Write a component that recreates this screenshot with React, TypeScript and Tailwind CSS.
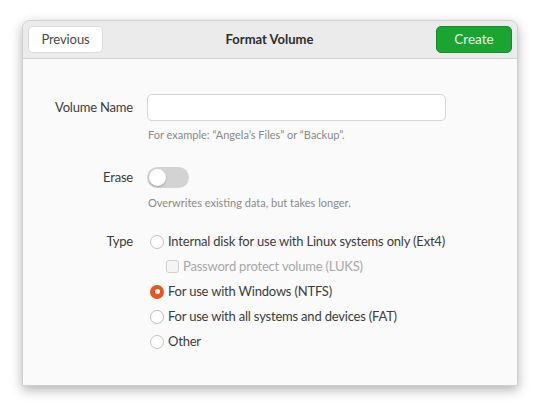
import React, { useState } from 'react';

const font = { fontFamily: 'Lato, "Noto Sans", sans-serif' };

type Opt = { id: string; label: string };

const OPTIONS: Opt[] = [
  { id: 'ext4', label: 'Internal disk for use with Linux systems only (Ext4)' },
  { id: 'ntfs', label: 'For use with Windows (NTFS)' },
  { id: 'fat', label: 'For use with all systems and devices (FAT)' },
  { id: 'other', label: 'Other' },
];

const Radio: React.FC<{ checked: boolean }> = ({ checked }) =>
  checked ? (
    <span className="w-[14px] h-[14px] rounded-full bg-[#e95420] flex items-center justify-center shrink-0">
      <span className="w-[5px] h-[5px] rounded-full bg-white" />
    </span>
  ) : (
    <span className="w-[14px] h-[14px] rounded-full border border-[#c0c0c0] bg-white shrink-0" />
  );

export default function App() {
  const [type, setType] = useState('ntfs');
  const [erase, setErase] = useState(false);

  const row = (o: Opt) => (
    <button
      key={o.id}
      onClick={() => setType(o.id)}
      className="flex items-center h-[25px] pl-[3px] gap-[4px] text-[13px] tracking-[-0.2px] text-[#3d3d3d] text-left"
    >
      <Radio checked={type === o.id} />
      <span>{o.label}</span>
    </button>
  );

  return (
    <div className="w-[540px] h-[410px] bg-white pt-[20px] pl-[22px]" style={font}>
      <div className="w-[496px] h-[366px] rounded-t-[8px] bg-[#fafafa] border border-[#cfcfcf] shadow-[0_4px_12px_rgba(0,0,0,0.3)] flex flex-col overflow-hidden">
        {/* Header bar */}
        <div className="h-[38px] shrink-0 bg-[#ebebeb] border-b border-[#d2d2d2] flex items-center justify-between px-[5px]">
          <button className="w-[75px] h-[27px] rounded-[5px] bg-white border border-[#dadada] text-[13px] tracking-[-0.1px] text-[#4a4a4a]">
            Previous
          </button>
          <span className="text-[13px] font-bold text-[#2e2e2e]">Format Volume</span>
          <button className="w-[76px] h-[27px] rounded-[5px] bg-[#1aa533] border border-[#138d28] text-[13.5px] text-[#e6f5e8]">
            Create
          </button>
        </div>

        {/* Body */}
        <div className="flex flex-col">
          <div className="flex items-center h-[27px] mt-[35px] gap-[14px]">
            <span className="w-[110px] text-right text-[13px] tracking-[-0.2px] text-[#3d3d3d]">Volume Name</span>
            <input className="w-[299px] h-[27px] rounded-[5px] border border-[#d5d5d5] bg-white outline-none px-2 text-[13px]" />
          </div>
          <div className="ml-[125px] mt-[6px] text-[11px] leading-[16px] text-[#8a8a8a]">
            For example: “Angela’s Files” or “Backup”.
          </div>

          <div className="flex items-center h-[21px] mt-[24px] gap-[14px]">
            <span className="w-[110px] text-right text-[13px] tracking-[-0.2px] text-[#3d3d3d]">Erase</span>
            <button
              onClick={() => setErase(!erase)}
              className={`w-[42px] h-[21px] rounded-full flex items-center px-[2px] ${erase ? 'bg-[#e95420] justify-end' : 'bg-[#d3d3d3] justify-start'}`}
            >
              <span className="w-[17px] h-[17px] rounded-full bg-white shadow-[0_1px_2px_rgba(0,0,0,0.25)]" />
            </button>
          </div>
          <div className="ml-[125px] mt-[7px] text-[11px] leading-[16px] text-[#8a8a8a]">
            Overwrites existing data, but takes longer.
          </div>

          <div className="flex mt-[18px] gap-[14px]">
            <span className="w-[110px] h-[25px] flex items-center justify-end text-[13px] tracking-[-0.2px] text-[#3d3d3d]">Type</span>
            <div className="flex flex-col">
              {row(OPTIONS[0])}
              <div className="flex items-center h-[25px] pl-[19px] gap-[4px] text-[13px] tracking-[-0.2px] text-[#a8a8a8]">
                <span className="w-[13px] h-[13px] rounded-[3px] border border-[#d0d0d0] bg-[#f4f4f4]" />
                <span>Password protect volume (LUKS)</span>
              </div>
              {OPTIONS.slice(1).map(row)}
            </div>
          </div>
        </div>
      </div>
    </div>
  );
}
